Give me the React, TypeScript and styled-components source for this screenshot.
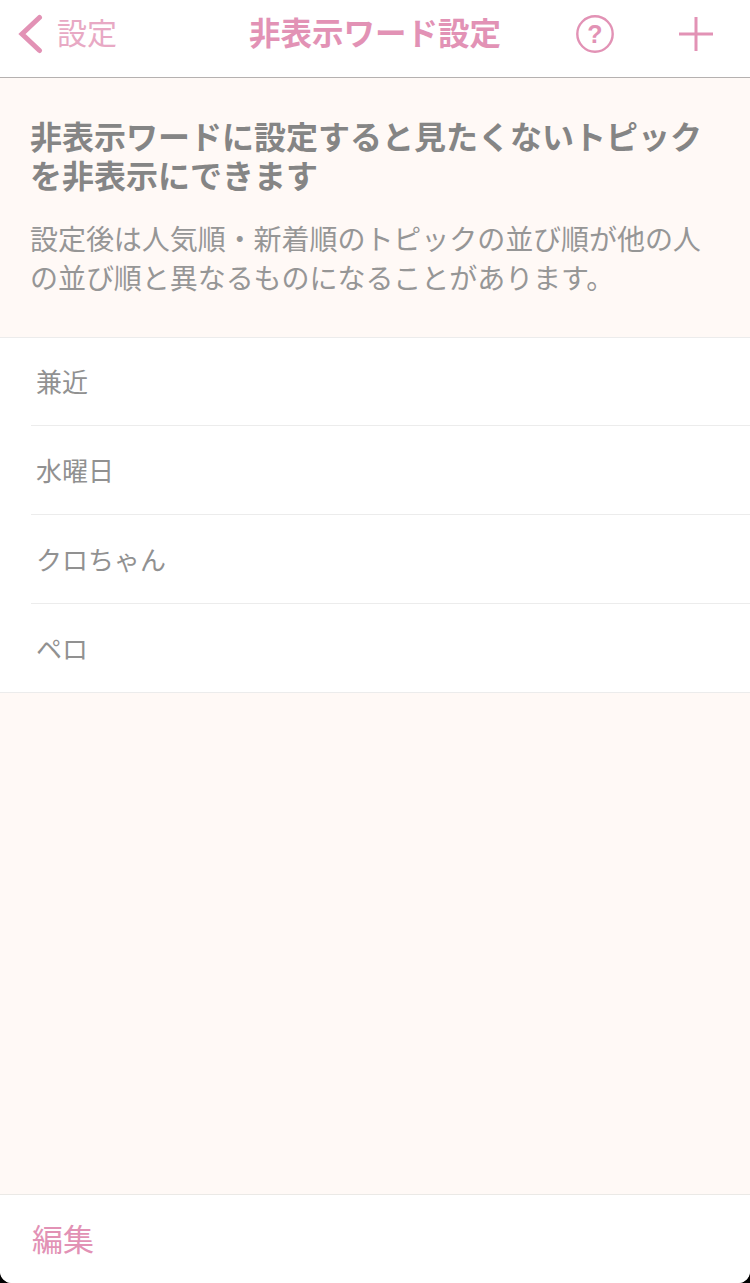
import styled, { createGlobalStyle } from 'styled-components';

const pink = '#e292b5';

const GlobalStyle = createGlobalStyle`
  html, body {
    margin: 0;
    padding: 0;
    background: #000;
  }
  body {
    font-family: "Noto Sans CJK JP", "Noto Sans", sans-serif;
  }
`;

const Screen = styled.div`
  width: 750px;
  height: 1283px;
  display: flex;
  flex-direction: column;
  background: #fff9f6;
  border-radius: 0 0 12px 12px;
  overflow: hidden;
`;

const NavBar = styled.header`
  height: 67px;
  flex: none;
  display: grid;
  grid-template-columns: 1fr auto 1fr;
  align-items: center;
  padding: 0 18px 10px;
  background: #fff;
  border-bottom: 1px solid #b5b1b0;
`;

const BackLink = styled.div`
  display: flex;
  align-items: center;
  gap: 14px;
`;

const BackLabel = styled.span`
  padding-bottom: 6px;
  font-size: 30px;
  color: #e8a9c4;
`;

const NavTitle = styled.h1`
  margin: 0;
  padding-bottom: 6px;
  font-size: 31.5px;
  font-weight: 700;
  color: ${pink};
`;

const NavActions = styled.div`
  display: flex;
  justify-content: flex-end;
  align-items: center;
  gap: 64px;
  padding-right: 18px;
`;

const Intro = styled.section`
  height: 259px;
  flex: none;
  box-sizing: border-box;
  padding: 38px 30px 0;
`;

const Headline = styled.h2`
  margin: 0 0 25px;
  font-size: 32px;
  line-height: 39px;
  font-weight: 700;
  color: #858585;
`;

const Note = styled.p`
  margin: 0;
  font-size: 28px;
  line-height: 39px;
  letter-spacing: -0.05px;
  color: #969696;
`;

const WordList = styled.ul`
  list-style: none;
  margin: 0;
  padding: 0;
  flex: none;
  background: #fff;
  border-top: 1px solid #ececec;
  border-bottom: 1px solid #ececec;
`;

const WordRow = styled.li`
  height: 89px;
  margin-left: 31px;
  padding: 0 0 2px 5px;
  display: flex;
  align-items: center;
  box-sizing: border-box;
  font-size: 26px;
  color: #919191;
  border-bottom: 1px solid #ececec;

  &:first-child {
    height: 88px;
  }

  &:last-child {
    height: 88px;
    border-bottom: none;
  }
`;

const Spacer = styled.div`
  flex: 1;
`;

const Toolbar = styled.footer`
  height: 85px;
  flex: none;
  display: flex;
  align-items: center;
  padding: 0 0 3px 32px;
  background: #fff;
  border-top: 1px solid #ebe9e6;
  font-size: 31px;
  color: ${pink};
`;

const words = ['兼近', '水曜日', 'クロちゃん', 'ペロ'];

export default function App() {
  return (
    <>
      <GlobalStyle />
      <Screen>
        <NavBar>
          <BackLink>
            <svg width="25" height="40" viewBox="0 0 25 40" fill="none">
              <path d="M21.5 3.5 L4 20 L21.5 36.5" stroke={pink} strokeWidth="5" strokeLinecap="round" />
            </svg>
            <BackLabel>設定</BackLabel>
          </BackLink>
          <NavTitle>非表示ワード設定</NavTitle>
          <NavActions>
            <svg width="38" height="38" viewBox="0 0 38 38" fill="none">
              <circle cx="19" cy="19" r="17.7" stroke={pink} strokeWidth="2.4" />
              <text x="19" y="28" textAnchor="middle" fontSize="25" fontWeight="700" fill={pink} fontFamily="Liberation Sans, sans-serif">?</text>
            </svg>
            <svg width="36" height="36" viewBox="0 0 36 36" fill="none">
              <path d="M18 1 V35 M1 18 H35" stroke={pink} strokeWidth="3" />
            </svg>
          </NavActions>
        </NavBar>
        <Intro>
          <Headline>非表示ワードに設定すると見たくないトピックを非表示にできます</Headline>
          <Note>設定後は人気順・新着順のトピックの並び順が他の人の並び順と異なるものになることがあります。</Note>
        </Intro>
        <WordList>
          {words.map((word) => (
            <WordRow key={word}>{word}</WordRow>
          ))}
        </WordList>
        <Spacer />
        <Toolbar>編集</Toolbar>
      </Screen>
    </>
  );
}
